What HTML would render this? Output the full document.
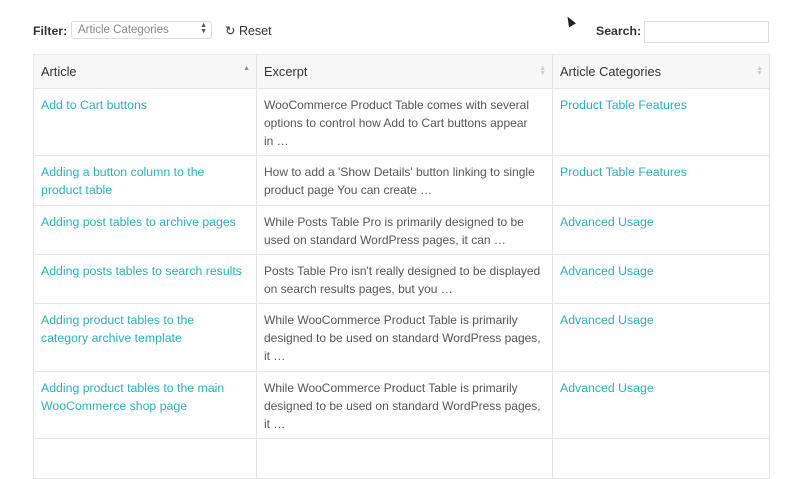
<!DOCTYPE html>
<html><head><style>
*{box-sizing:border-box;margin:0;padding:0}
body{width:800px;height:450px;overflow:hidden;background:#fff;font-family:"Liberation Sans",sans-serif;font-size:12.3px;color:#555;position:relative}
.abs{position:absolute}
table{position:absolute;left:33px;top:54px;border-collapse:collapse;table-layout:fixed;width:736px}
td,th{border:1px solid #e6e6e6;vertical-align:top;padding:7px 7px 0 7px;line-height:18px;text-align:left;font-weight:normal;white-space:nowrap;overflow:hidden}
td:nth-child(2){font-size:12px}
th{background:#f7f7f7;height:34px;padding:8px 7px 0 7px;color:#333;font-size:12.8px;position:relative}
td a{color:#2aafbd;text-decoration:none}
.s{position:absolute;right:6px;top:11px;font-size:7px;line-height:5px;color:#ccc}
</style></head><body>
<div class="abs" style="left:33px;top:24px;font-weight:bold;color:#333;font-size:12.3px">Filter:</div>
<div class="abs" style="left:71px;top:21px;width:141px;height:18px;border:1px solid #ddd;border-radius:3px;font-size:11.5px;color:#888;padding:2px 6px;line-height:13px">Article Categories<span style="position:absolute;right:4px;top:1px;font-size:7px;line-height:6px;color:#555">▲<br>▼</span></div>
<div class="abs" style="left:225px;top:23px;color:#333;font-size:12.5px">↻ Reset</div>
<div class="abs" style="left:566px;top:16px;width:0;height:0;border-left:4px solid transparent;border-right:4px solid transparent;border-bottom:10px solid #222;transform:rotate(-30deg)"></div>
<div class="abs" style="left:596px;top:24px;font-weight:bold;color:#333">Search:</div>
<div class="abs" style="left:644px;top:21px;width:125px;height:22px;border:1px solid #ddd"></div>
<table>
<colgroup><col style="width:223px"><col style="width:296px"><col style="width:217px"></colgroup>
<tr><th>Article<span class="s" style="color:#888">▲</span></th><th>Excerpt<span class="s">▲<br>▼</span></th><th>Article Categories<span class="s">▲<br>▼</span></th></tr>
<tr style="height:67px"><td><a>Add to Cart buttons</a></td><td>WooCommerce Product Table comes with several<br>options to control how Add to Cart buttons appear<br>in …</td><td><a>Product Table Features</a></td></tr>
<tr style="height:50px"><td><a>Adding a button column to the<br>product table</a></td><td>How to add a 'Show Details' button linking to single<br>product page You can create …</td><td><a>Product Table Features</a></td></tr>
<tr style="height:49px"><td><a>Adding post tables to archive pages</a></td><td>While Posts Table Pro is primarily designed to be<br>used on standard WordPress pages, it can …</td><td><a>Advanced Usage</a></td></tr>
<tr style="height:49px"><td><a>Adding posts tables to search results</a></td><td>Posts Table Pro isn't really designed to be displayed<br>on search results pages, but you …</td><td><a>Advanced Usage</a></td></tr>
<tr style="height:68px"><td><a>Adding product tables to the<br>category archive template</a></td><td>While WooCommerce Product Table is primarily<br>designed to be used on standard WordPress pages,<br>it …</td><td><a>Advanced Usage</a></td></tr>
<tr style="height:67px"><td><a>Adding product tables to the main<br>WooCommerce shop page</a></td><td>While WooCommerce Product Table is primarily<br>designed to be used on standard WordPress pages,<br>it …</td><td><a>Advanced Usage</a></td></tr>
<tr style="height:40px"><td></td><td></td><td></td></tr>
</table>
</body></html>
